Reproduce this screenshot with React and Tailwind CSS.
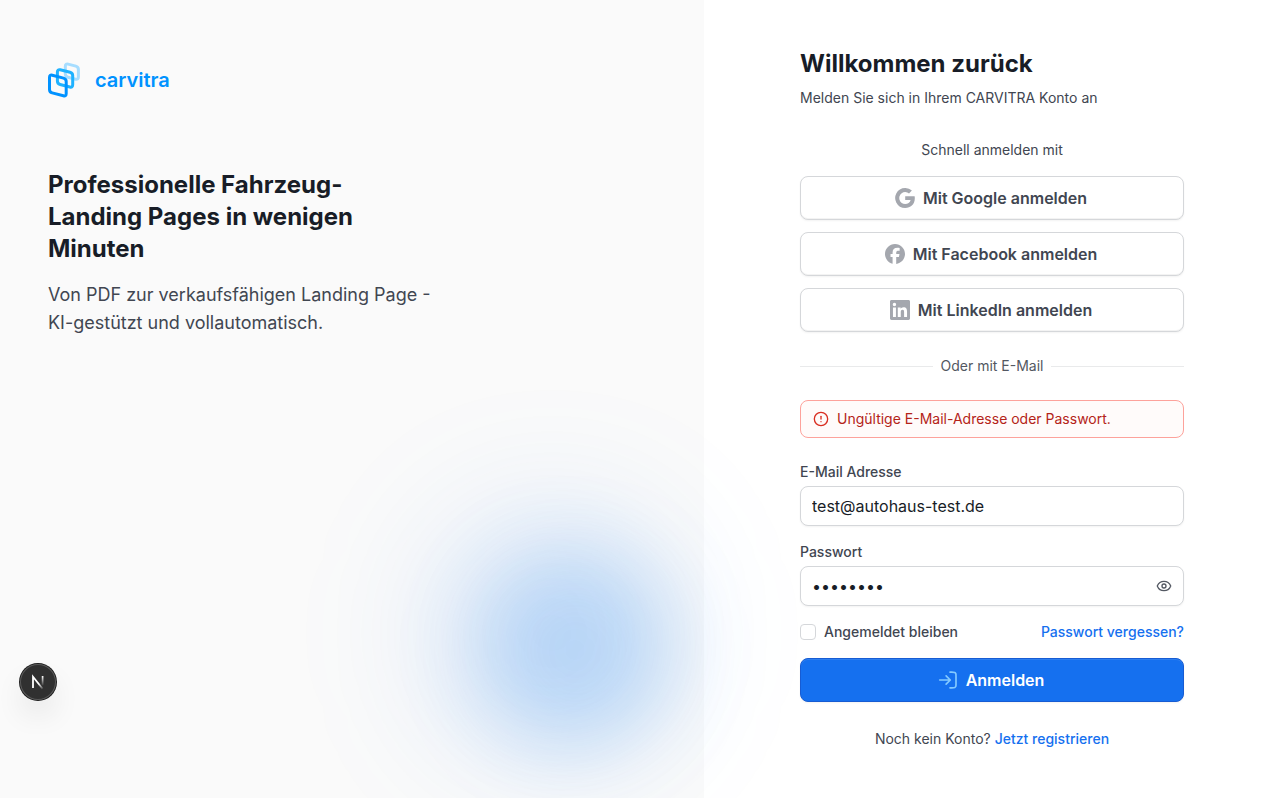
import { useState } from "react";
import { SiFacebook } from "react-icons/si";
import { AlertCircle, Eye } from "lucide-react";

function LogoMark() {
  return (
    <svg width="32" height="36" viewBox="0 0 32 36" fill="none" strokeWidth="3" strokeLinejoin="round" aria-hidden="true">
      <path d="M17.3 4.4Q17.3 1.5 20.1 2.1L27.8 4.1Q30.4 4.8 30.4 7.5V14.8Q30.4 17.9 27.6 17.2L19.9 15.2Q17.3 14.5 17.3 11.8Z" stroke="#A6DDFF" />
      <path d="M9.4 10.1Q9.4 7.2 12.2 7.8L22 10.3Q24.7 11 24.7 13.7V22.6Q24.7 25.7 21.9 25L12.1 22.5Q9.4 21.8 9.4 19.1Z" stroke="#1FB2FF" />
      <path d="M1.5 15.6Q1.5 12.6 4.3 13.2L15.5 16.1Q18.2 16.8 18.2 19.5V31.4Q18.2 34.5 15.4 33.8L4.2 30.9Q1.5 30.2 1.5 27.5Z" stroke="#0092FF" />
    </svg>
  );
}

function GoogleIcon({ className }) {
  return (
    <svg className={className} viewBox="0 0 24 24" fill="currentColor" aria-hidden="true">
      <path d="M23.766 12.276c0-.815-.066-1.636-.207-2.438H12.24v4.62h6.482a5.554 5.554 0 0 1-2.399 3.646v2.998h3.867c2.271-2.09 3.576-5.177 3.576-8.826Z" />
      <path d="M12.24 24c3.237 0 5.966-1.062 7.955-2.897l-3.867-2.998c-1.076.732-2.465 1.146-4.084 1.146-3.131 0-5.785-2.112-6.737-4.952h-3.99v3.091A12.002 12.002 0 0 0 12.24 24Z" />
      <path d="M5.503 14.3a7.188 7.188 0 0 1 0-4.594V6.615H1.517a12.01 12.01 0 0 0 0 10.776l3.986-3.09Z" />
      <path d="M12.24 4.75a6.52 6.52 0 0 1 4.603 1.799l3.426-3.426A11.533 11.533 0 0 0 12.24 0 12 12 0 0 0 1.517 6.615l3.986 3.09C6.451 6.864 9.109 4.75 12.24 4.75Z" />
    </svg>
  );
}

function LinkedInIcon({ className }) {
  return (
    <svg className={className} viewBox="0 0 24 24" fill="currentColor" aria-hidden="true">
      <path d="M22.223 0H1.772C.792 0 0 .773 0 1.727v20.541C0 23.222.792 24 1.772 24h20.451c.98 0 1.777-.778 1.777-1.732V1.727C24 .773 23.203 0 22.223 0ZM7.12 20.452H3.558V8.995H7.12v11.457ZM5.339 7.433a2.064 2.064 0 1 1 0-4.13 2.064 2.064 0 0 1 0 4.13Zm15.113 13.019h-3.558v-5.569c0-1.328-.024-3.037-1.851-3.037-1.851 0-2.133 1.447-2.133 2.942v5.664H9.356V8.995h3.412v1.566h.047c.474-.9 1.636-1.851 3.366-1.851 3.605 0 4.271 2.372 4.271 5.457v6.285Z" />
    </svg>
  );
}

function SignInIcon({ className }) {
  return (
    <svg className={className} viewBox="0 0 20 20" fill="none" stroke="currentColor" strokeWidth="1.67" strokeLinecap="round" strokeLinejoin="round" aria-hidden="true">
      <path d="M1.7 10H12.2M8.1 5.8L12.3 10L8.1 14.2M12 2.2H13.7C15.3 2.2 16.1 2.2 16.7 2.5C17.2 2.8 17.5 3.1 17.8 3.6C18 4.2 18 4.9 18 6.2V13.8C18 15.1 18 15.8 17.8 16.4C17.5 16.9 17.2 17.2 16.7 17.5C16.1 17.8 15.3 17.8 13.7 17.8H12" />
    </svg>
  );
}

const providers = [
  { name: "Google", Icon: GoogleIcon },
  { name: "Facebook", Icon: SiFacebook },
  { name: "LinkedIn", Icon: LinkedInIcon },
];

const inputClass =
  "h-10 w-full rounded-lg border border-[#d5d7da] bg-white px-[11px] text-base text-[#181d27] shadow-xs outline-none focus:border-[#1570ef]";

function DevBadge() {
  return (
    <button
      type="button"
      aria-label="Next.js Dev Tools"
      className="fixed bottom-[98px] left-5 z-20 flex size-9 items-center justify-center rounded-full bg-[#303030] ring-1 ring-[#1b1b1b] shadow-[inset_0_0_0_1px_#5a5a5a,0_16px_32px_-8px_rgba(0,0,0,0.24)]"
    >
      <svg width="40" height="40" viewBox="0 0 40 40" fill="none" className="shrink-0" aria-hidden="true">
        <defs>
          <linearGradient id="badge-diagonal" x1="22" y1="21" x2="26" y2="27" gradientUnits="userSpaceOnUse">
            <stop stopColor="#fff" />
            <stop offset="1" stopColor="#fff" stopOpacity="0" />
          </linearGradient>
          <linearGradient id="badge-stem" x1="25" y1="14" x2="25" y2="24" gradientUnits="userSpaceOnUse">
            <stop stopColor="#fff" />
            <stop offset="1" stopColor="#fff" stopOpacity="0" />
          </linearGradient>
        </defs>
        <path d="M15 26V14.8L24.6 26.8" stroke="url(#badge-diagonal)" strokeWidth="1.8" />
        <path d="M24.6 14V23.5" stroke="url(#badge-stem)" strokeWidth="1.7" />
      </svg>
    </button>
  );
}

function BrandPanel() {
  return (
    <section className="relative hidden w-[55%] bg-[#fafafa] lg:block">
      <div aria-hidden="true" className="absolute right-[24px] bottom-[37px] size-64 rounded-full bg-[#1570ef]/12 blur-3xl" />
      <div aria-hidden="true" className="absolute right-[33px] bottom-[52px] size-48 rounded-full bg-[#1583ef]/20 blur-2xl" />
      <div className="relative flex flex-col gap-16 px-12 py-[62px]">
        <a href="#" className="flex items-center gap-[15px] text-xl font-semibold text-[#0092ff]">
          <LogoMark />
          carvitra
        </a>
        <div className="flex max-w-sm flex-col gap-4 pt-[7px]">
          <h2 className="text-2xl font-bold text-[#181d27]">Professionelle Fahrzeug-Landing Pages in wenigen Minuten</h2>
          <p className="text-lg text-[#414651]">Von PDF zur verkaufsfähigen Landing Page - KI-gestützt und vollautomatisch.</p>
        </div>
      </div>
    </section>
  );
}

function LoginForm() {
  const [visible, setVisible] = useState(false);
  return (
    <div className="w-full max-w-sm">
      <h1 className="text-2xl font-bold text-[#181d27]">Willkommen zurück</h1>
      <p className="mt-2 text-sm text-[#414651]">Melden Sie sich in Ihrem CARVITRA Konto an</p>

      <p className="mt-8 text-center text-sm text-[#414651]">Schnell anmelden mit</p>
      <div className="mt-4 flex flex-col gap-3">
        {providers.map(({ name, Icon }) => (
          <button key={name} type="button" className="flex h-11 items-center justify-center gap-1.5 rounded-lg border border-[#d5d7da] bg-white font-semibold text-[#414651] shadow-[inset_0_-1px_0_rgba(10,13,18,0.05),0_1px_2px_rgba(10,13,18,0.05)]">
            <Icon className="size-5 text-[#a4a7ae]" />
            <span className="px-0.5">Mit {name} anmelden</span>
          </button>
        ))}
      </div>

      <div className="mt-6 flex items-center gap-2 text-sm text-[#535862]">
        <span className="h-px flex-1 bg-[#e9eaeb]" />
        Oder mit E-Mail
        <span className="h-px flex-1 bg-[#e9eaeb]" />
      </div>

      <form className="mt-6" onSubmit={(event) => event.preventDefault()}>
        <div role="alert" className="flex items-center gap-2 rounded-lg border border-[#fda29b] bg-[#fffbfa] px-3 py-2 text-sm text-[#b42318]">
          <AlertCircle className="size-4 text-[#d92d20]" />
          Ungültige E-Mail-Adresse oder Passwort.
        </div>

        <div className="mt-6 flex flex-col gap-1">
          <label htmlFor="email" className="text-sm font-medium text-[#414651]">E-Mail Adresse</label>
          <input id="email" type="email" defaultValue="test@autohaus-test.de" className={inputClass} />
        </div>

        <div className="mt-4 flex flex-col gap-1">
          <label htmlFor="password" className="text-sm font-medium text-[#414651]">Passwort</label>
          <div className="relative">
            <input id="password" type={visible ? "text" : "password"} defaultValue="passwort" className={inputClass} />
            <button type="button" aria-label="Passwort anzeigen" onClick={() => setVisible(!visible)} className="absolute inset-y-0 right-3 flex items-center text-[#535862]">
              <Eye className="size-4" />
            </button>
          </div>
        </div>

        <div className="mt-4 flex items-center justify-between text-sm font-medium">
          <label className="flex items-center gap-2 text-[#414651]">
            <input type="checkbox" className="size-4 appearance-none rounded-sm border border-[#d5d7da] bg-white checked:border-[#1570ef] checked:bg-[#1570ef]" />
            Angemeldet bleiben
          </label>
          <a href="#" className="text-[#1570ef]">Passwort vergessen?</a>
        </div>

        <button type="submit" className="mt-4 flex h-11 w-full items-center justify-center gap-1.5 rounded-lg border border-[#175cd3] bg-[#1570ef] font-semibold text-white shadow-[inset_0_1px_0_rgba(255,255,255,0.1),0_1px_2px_rgba(10,13,18,0.05)]">
          <SignInIcon className="size-5 text-[#84caff]" />
          <span className="px-0.5">Anmelden</span>
        </button>
      </form>

      <p className="mt-[27px] text-center text-sm text-[#414651]">
        Noch kein Konto? <a href="#" className="font-medium text-[#1570ef]">Jetzt registrieren</a>
      </p>
    </div>
  );
}

export default function App() {
  return (
    <div className="relative flex min-h-screen overflow-hidden bg-white font-['Inter',sans-serif]">
      <BrandPanel />
      <main className="relative z-10 flex flex-1 items-start justify-center p-12">
        <LoginForm />
      </main>
      <DevBadge />
    </div>
  );
}
